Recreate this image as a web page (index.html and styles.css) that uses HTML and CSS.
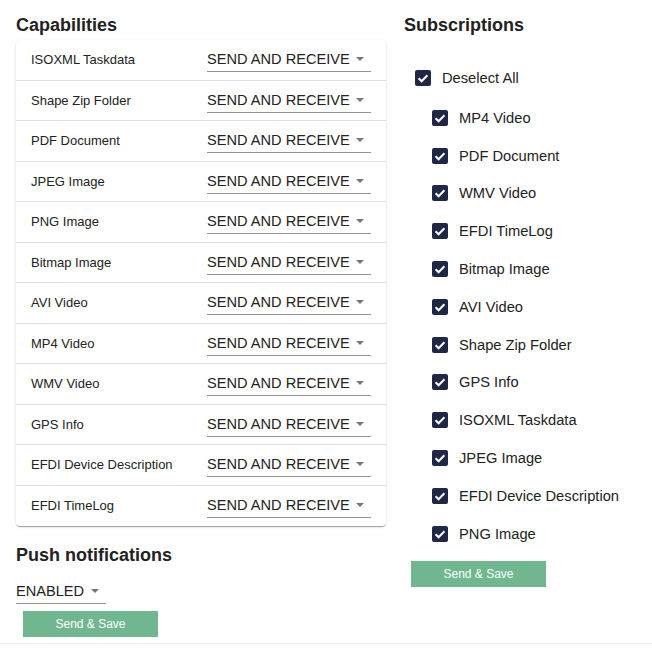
FILE: index.html
```html
<!DOCTYPE html>
<html>
<head>
<meta charset="utf-8">
<link rel="stylesheet" href="styles.css">
</head>
<body>
<div class="page">
  <div class="left">
    <h2 class="title">Capabilities</h2>
    <div class="card">
      <div class="row"><span class="label">ISOXML Taskdata</span><span class="select"><span class="val">SEND AND RECEIVE</span><span class="arrow"></span></span></div>
      <div class="row"><span class="label">Shape Zip Folder</span><span class="select"><span class="val">SEND AND RECEIVE</span><span class="arrow"></span></span></div>
      <div class="row"><span class="label">PDF Document</span><span class="select"><span class="val">SEND AND RECEIVE</span><span class="arrow"></span></span></div>
      <div class="row"><span class="label">JPEG Image</span><span class="select"><span class="val">SEND AND RECEIVE</span><span class="arrow"></span></span></div>
      <div class="row"><span class="label">PNG Image</span><span class="select"><span class="val">SEND AND RECEIVE</span><span class="arrow"></span></span></div>
      <div class="row"><span class="label">Bitmap Image</span><span class="select"><span class="val">SEND AND RECEIVE</span><span class="arrow"></span></span></div>
      <div class="row"><span class="label">AVI Video</span><span class="select"><span class="val">SEND AND RECEIVE</span><span class="arrow"></span></span></div>
      <div class="row"><span class="label">MP4 Video</span><span class="select"><span class="val">SEND AND RECEIVE</span><span class="arrow"></span></span></div>
      <div class="row"><span class="label">WMV Video</span><span class="select"><span class="val">SEND AND RECEIVE</span><span class="arrow"></span></span></div>
      <div class="row"><span class="label">GPS Info</span><span class="select"><span class="val">SEND AND RECEIVE</span><span class="arrow"></span></span></div>
      <div class="row"><span class="label">EFDI Device Description</span><span class="select"><span class="val">SEND AND RECEIVE</span><span class="arrow"></span></span></div>
      <div class="row last"><span class="label">EFDI TimeLog</span><span class="select"><span class="val">SEND AND RECEIVE</span><span class="arrow"></span></span></div>
    </div>
    <h2 class="title push">Push notifications</h2>
    <span class="select small"><span class="val">ENABLED</span><span class="arrow"></span></span>
    <button class="btn btn-left">Send &amp; Save</button>
  </div>
  <div class="right">
    <h2 class="title">Subscriptions</h2>
    <div class="checks">
      <label class="check all"><span class="box"><svg viewBox="0 0 16 16"><path d="M3.6 8.2l3 3 5.8-6" /></svg></span>Deselect All</label>
      <label class="check"><span class="box"><svg viewBox="0 0 16 16"><path d="M3.6 8.2l3 3 5.8-6" /></svg></span>MP4 Video</label>
      <label class="check"><span class="box"><svg viewBox="0 0 16 16"><path d="M3.6 8.2l3 3 5.8-6" /></svg></span>PDF Document</label>
      <label class="check"><span class="box"><svg viewBox="0 0 16 16"><path d="M3.6 8.2l3 3 5.8-6" /></svg></span>WMV Video</label>
      <label class="check"><span class="box"><svg viewBox="0 0 16 16"><path d="M3.6 8.2l3 3 5.8-6" /></svg></span>EFDI TimeLog</label>
      <label class="check"><span class="box"><svg viewBox="0 0 16 16"><path d="M3.6 8.2l3 3 5.8-6" /></svg></span>Bitmap Image</label>
      <label class="check"><span class="box"><svg viewBox="0 0 16 16"><path d="M3.6 8.2l3 3 5.8-6" /></svg></span>AVI Video</label>
      <label class="check"><span class="box"><svg viewBox="0 0 16 16"><path d="M3.6 8.2l3 3 5.8-6" /></svg></span>Shape Zip Folder</label>
      <label class="check"><span class="box"><svg viewBox="0 0 16 16"><path d="M3.6 8.2l3 3 5.8-6" /></svg></span>GPS Info</label>
      <label class="check"><span class="box"><svg viewBox="0 0 16 16"><path d="M3.6 8.2l3 3 5.8-6" /></svg></span>ISOXML Taskdata</label>
      <label class="check"><span class="box"><svg viewBox="0 0 16 16"><path d="M3.6 8.2l3 3 5.8-6" /></svg></span>JPEG Image</label>
      <label class="check"><span class="box"><svg viewBox="0 0 16 16"><path d="M3.6 8.2l3 3 5.8-6" /></svg></span>EFDI Device Description</label>
      <label class="check"><span class="box"><svg viewBox="0 0 16 16"><path d="M3.6 8.2l3 3 5.8-6" /></svg></span>PNG Image</label>
    </div>
    <button class="btn btn-right">Send &amp; Save</button>
  </div>
</div>
<div class="footer"></div>
</body>
</html>
```
FILE: styles.css
```css
html, body {
  margin: 0;
  padding: 0;
  background: #fff;
  font-family: "Liberation Sans", Arial, sans-serif;
  color: rgba(0, 0, 0, 0.87);
}
.page {
  display: flex;
  align-items: flex-start;
  height: 643px;
}
.left {
  width: 370px;
  margin-left: 16px;
  display: flex;
  flex-direction: column;
  align-items: flex-start;
}
.title {
  margin: 0;
  font-size: 18px;
  font-weight: bold;
  line-height: 22px;
  color: #222;
  padding-top: 14px;
  height: 26px;
}
.card {
  width: 370px;
  border-radius: 4px;
  box-shadow: 0 2px 1px -1px rgba(0,0,0,0.2), 0 1px 1px 0 rgba(0,0,0,0.14), 0 1px 3px 0 rgba(0,0,0,0.12);
  background: #fff;
}
.row {
  height: 40.5px;
  box-sizing: border-box;
  display: flex;
  align-items: center;
  border-bottom: 1px solid #e0e0e0;
}
.row.last { border-bottom: none; }
.label {
  width: 176px;
  padding-left: 15px;
  font-size: 13px;
  color: #222;
}
.select {
  width: 164px;
  height: 25px;
  box-sizing: border-box;
  display: flex;
  align-items: center;
  border-bottom: 1px solid #949494;
  font-size: 14.6px;
  line-height: 24px;
  color: #222;
}
.val { flex: 1; white-space: nowrap; }
.arrow {
  width: 0;
  height: 0;
  border-left: 4.5px solid transparent;
  border-right: 4.5px solid transparent;
  border-top: 4.5px solid #757575;
  margin-right: 7px;
}
.push {
  margin-top: 18px;
  padding-top: 0;
  height: 35px;
}
.select.small {
  width: 90px;
}
.btn {
  width: 135px;
  height: 26px;
  border: none;
  background: #70b78f;
  color: #fff;
  font-family: "Liberation Sans", Arial, sans-serif;
  font-size: 12px;
  padding: 0;
  cursor: pointer;
}
.btn-left {
  margin-top: 7px;
  margin-left: 7px;
}
.right {
  margin-left: 18px;
  display: flex;
  flex-direction: column;
  align-items: flex-start;
}
.checks {
  display: flex;
  flex-direction: column;
  padding-top: 16px;
}
.check {
  height: 37.8px;
  display: flex;
  align-items: center;
  font-size: 14.7px;
  color: #222;
  padding-left: 28px;
}
.check.all {
  padding-left: 11px;
  height: 43px;
}
.box {
  width: 16px;
  height: 16px;
  border-radius: 2px;
  background: #1f2745;
  margin-right: 11px;
  display: flex;
}
.box svg {
  width: 16px;
  height: 16px;
  fill: none;
  stroke: #fff;
  stroke-width: 2;
}
.btn-right {
  margin-top: 8px;
  margin-left: 7px;
}
.footer {
  border-top: 1px solid #f0f0f0;
  height: 6px;
}
```
